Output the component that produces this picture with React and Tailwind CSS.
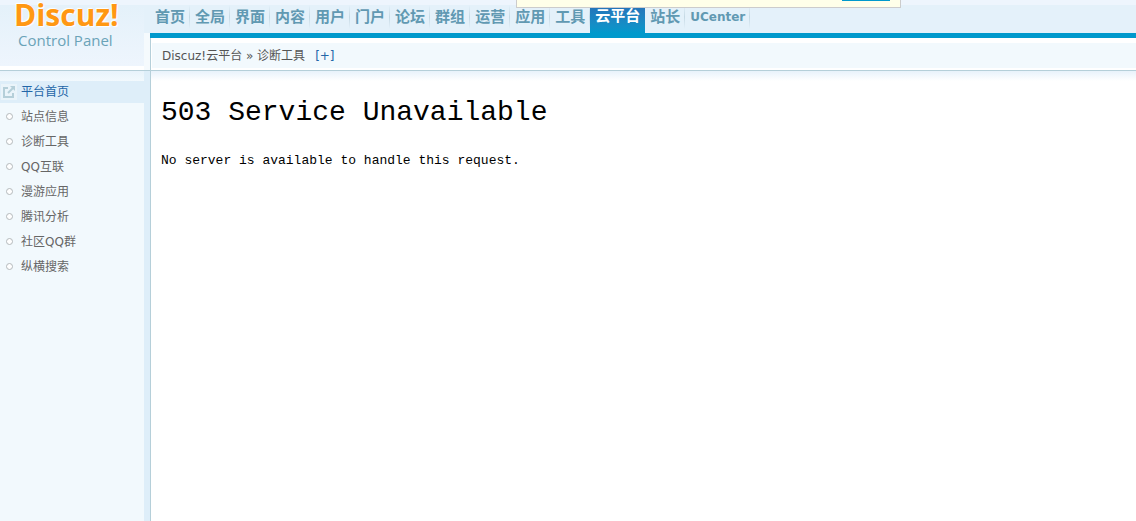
const NAV = [
  "首页", "全局", "界面", "内容", "用户", "门户", "论坛", "群组",
  "运营", "应用", "工具", "云平台", "站长", "UCenter",
];

const MENU = [
  "平台首页", "站点信息", "诊断工具", "QQ互联",
  "漫游应用", "腾讯分析", "社区QQ群", "纵横搜索",
];

const ACTIVE_NAV = "云平台";
const ACTIVE_MENU = "平台首页";

const Logo = () => (
  <div className="w-36 h-[66px] shrink-0 pl-3.5 bg-[linear-gradient(#eef5fd_5px,#e4f1fa_5px,#eef5fd)] font-['Open_Sans',sans-serif]">
    <div className="text-[30px] leading-[30px] font-bold text-[#ff9813] [text-shadow:1px_1px_1px_#fff,-1px_-1px_1px_#fff]">
      Discuz!
    </div>
    <div className="pl-1 text-[15px] leading-5 text-[#6aa3b8]">Control Panel</div>
  </div>
);

const TopNav = () => (
  <nav className="h-[38px] border-t-[5px] border-t-[#eef5fd] border-b-[5px] border-b-[#0099cc] bg-[#e4f1fa]">
    <ul className="flex">
      {NAV.map((label) => (
        <li key={label} className="flex h-7">
          {label === ACTIVE_NAV ? (
            <a href="#" className="px-[5px] text-[15px] leading-[23px] font-bold text-white bg-gradient-to-b from-[#2672b8] to-[#0099cc]">
              {label}
            </a>
          ) : (
            <>
              <a href="#" className={`pl-[5px] pr-1 leading-6 font-bold text-[#6199b2] ${label === "UCenter" ? "text-xs" : "text-[15px]"}`}>
                {label}
              </a>
              <span className="w-px h-6 bg-gradient-to-b from-[#e4f1fa] via-[#c5d9e4] to-[#e4f1fa]" />
            </>
          )}
        </li>
      ))}
    </ul>
  </nav>
);

const Breadcrumb = () => (
  <div className="h-8 border-l border-[#b5cfd9] pl-px pt-[5px] pb-0.5 bg-white">
    <div className="h-[25px] px-2.5 flex items-center text-xs text-[#555] bg-[#f2f9fd]">
      <span className="whitespace-pre">Discuz!云平台 » 诊断工具</span>
      <a href="#" className="ml-2.5 text-[#2366a8]">[+]</a>
    </div>
  </div>
);

const OpenIcon = () => (
  <svg className="w-4 h-4 bg-[#eaf4fa]" viewBox="0 0 16 16" fill="none" stroke="#b5cfd9" strokeWidth="2">
    <path d="M7 4H3v9h9V9" />
    <path d="M7 9l5-5" />
    <path d="M9 2h5v5z" fill="#b5cfd9" stroke="none" />
  </svg>
);

const Bullet = () => (
  <svg className="w-4 h-4" viewBox="0 0 16 16" fill="#fff" stroke="#b4b9bb">
    <circle cx="8.5" cy="7.5" r="3" />
  </svg>
);

const Sidebar = () => (
  <aside className="w-[151px] shrink-0 border-r border-[#b5cfd9] pr-1.5 bg-[#deeef9]">
    <ul className="h-full pt-2.5 bg-[#f2f9fd] bg-[linear-gradient(#e8f3fb,#f2f9fd_10px)]">
      {MENU.map((label) => (
        <li key={label} className="mb-[3px]">
          <a
            href="#"
            className={`flex items-center gap-1 h-[22px] pl-px text-xs ${
              label === ACTIVE_MENU ? "bg-[#deeef9] text-[#2366a8]" : "text-[#666]"
            }`}
          >
            {label === ACTIVE_MENU ? <OpenIcon /> : <Bullet />}
            {label}
          </a>
        </li>
      ))}
    </ul>
  </aside>
);

const Notice = () => (
  <div className="absolute top-0 left-[516px] w-[385px] h-2 border border-t-0 border-[#ccc] bg-[#ffffe9]">
    <div className="ml-auto mr-2.5 w-12 h-px bg-[#0099cc]" />
  </div>
);

const App = () => (
  <div className="relative min-h-screen flex flex-col bg-white font-['DejaVu_Sans','Noto_Sans_CJK_SC',sans-serif]">
    <header className="flex border-b border-[#b5cfd9]">
      <Logo />
      <div className="w-1.5 bg-[linear-gradient(#eef5fd_5px,#e4f1fa_5px,#e4f1fa_33px,#f5fafd_33px)]" />
      <div className="flex-1">
        <TopNav />
        <Breadcrumb />
      </div>
    </header>
    <div className="flex flex-1">
      <Sidebar />
      <main className="flex-1 px-2.5 pt-5 bg-[linear-gradient(#e8f2fb,#fff_10px)] bg-white font-['Liberation_Mono',monospace] text-black">
        <h1 className="text-[28px] leading-11">503 Service Unavailable</h1>
        <p className="mt-4 text-[13px] leading-5">No server is available to handle this request.</p>
      </main>
    </div>
    <Notice />
  </div>
);

export default App;
